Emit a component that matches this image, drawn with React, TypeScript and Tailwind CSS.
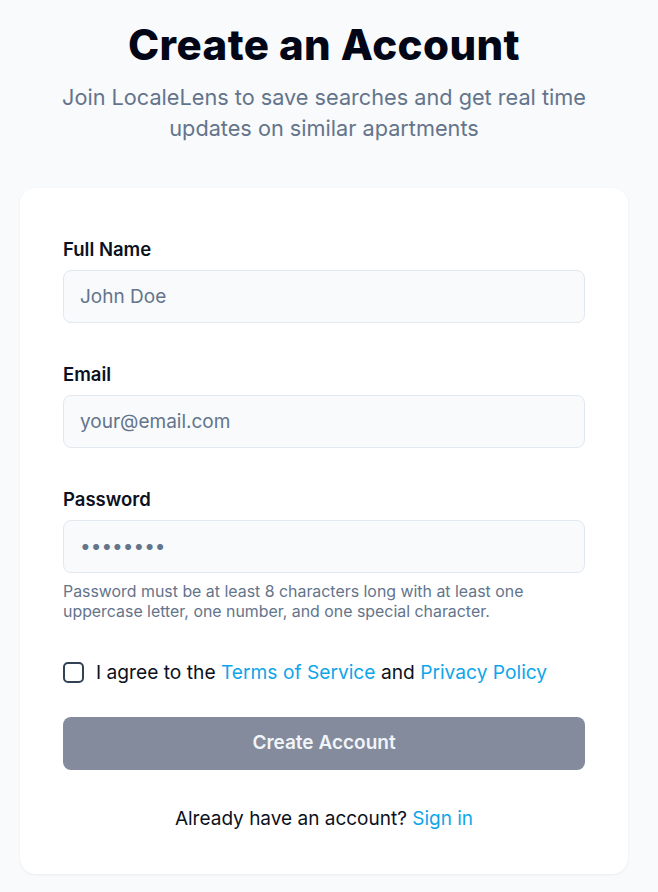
import { useState } from "react";

function Field({
  label,
  type,
  placeholder,
  defaultValue,
}: {
  label: string;
  type: string;
  placeholder?: string;
  defaultValue?: string;
}) {
  return (
    <label className="block">
      <span className="block text-[18.5px] leading-6 font-semibold text-[#0b1120]">{label}</span>
      <input
        type={type}
        placeholder={placeholder}
        defaultValue={defaultValue}
        className="mt-[9px] block h-[53px] w-full rounded-lg border border-[#e2e8f0] bg-[#f8fafc] px-4 text-[19px] text-[#64748b] placeholder:text-[#64748b] outline-none"
      />
    </label>
  );
}

export default function App() {
  const [agreed, setAgreed] = useState(false);

  return (
    <div className="min-h-[892px] bg-[#f8fafc] font-['Inter',sans-serif]">
      <div className="w-[648px] px-5 pt-[22px] pb-5">
        <h1 className="text-center text-[42px] leading-[46px] font-extrabold tracking-[0.01em] text-[#020617]">
          Create an Account
        </h1>
        <p className="mx-auto mt-[14px] max-w-[560px] text-center text-[21.7px] leading-[31px] text-[#64748b]">
          Join LocaleLens to save searches and get real time updates on similar apartments
        </p>

        <div className="mt-[44px] rounded-2xl bg-white px-[43px] pt-[49px] pb-[41px] shadow-[0_1px_3px_rgba(15,23,42,0.06)]">
          <form onSubmit={(e) => e.preventDefault()}>
            <Field label="Full Name" type="text" placeholder="John Doe" />
            <div className="mt-[39px]">
              <Field label="Email" type="email" placeholder="your@email.com" />
            </div>
            <div className="mt-[39px]">
              <Field label="Password" type="password" defaultValue="password" />
              <p className="mt-[9px] text-[15.9px] leading-5 text-[#64748b]">
                Password must be at least 8 characters long with at least one uppercase letter, one
                number, and one special character.
              </p>
            </div>

            <label className="mt-[36px] flex items-center gap-3 text-[19.2px] text-[#0b1120]">
              <input
                type="checkbox"
                checked={agreed}
                onChange={(e) => setAgreed(e.target.checked)}
                className="size-[21px] shrink-0 appearance-none rounded-[5px] border-2 border-[#334155] bg-white"
              />
              <span>
                I agree to the <a className="text-[#0ea5e9]">Terms of Service</a> and{" "}
                <a className="text-[#0ea5e9]">Privacy Policy</a>
              </span>
            </label>

            <button
              type="submit"
              disabled={!agreed}
              className="mt-[30px] h-[53px] w-full rounded-lg bg-[#838b9c] text-[19px] font-semibold text-[#f1f5f9]"
            >
              Create Account
            </button>

            <p className="mt-[35px] text-center text-[19px] text-[#0b1120]">
              Already have an account? <a className="text-[#0ea5e9]">Sign in</a>
            </p>
          </form>
        </div>
      </div>
    </div>
  );
}
